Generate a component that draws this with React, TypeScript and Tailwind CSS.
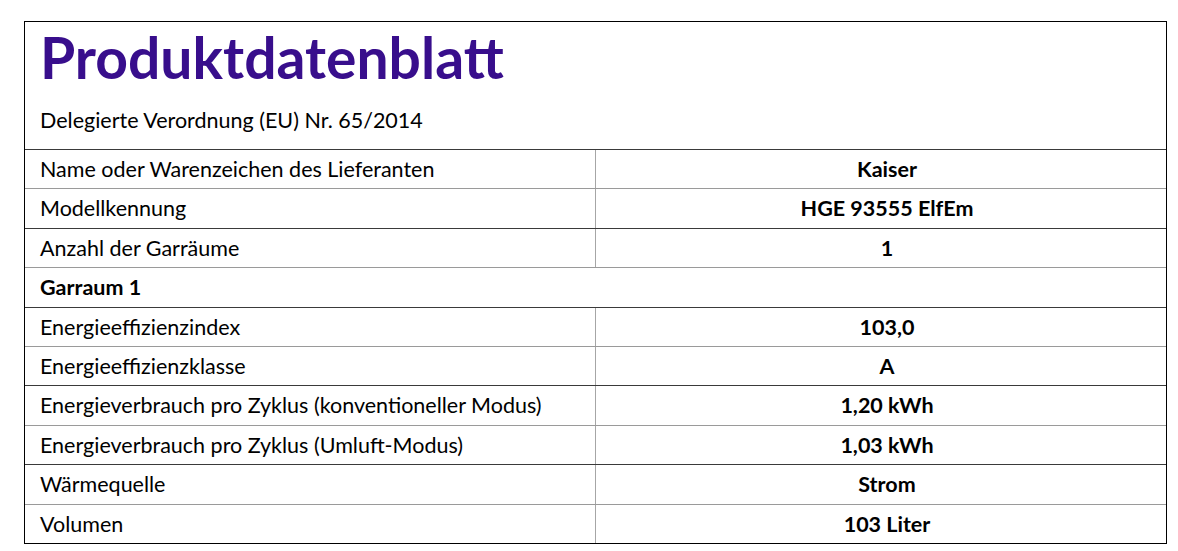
const rows: { label: string; value?: string; section?: boolean }[] = [
  { label: "Name oder Warenzeichen des Lieferanten", value: "Kaiser" },
  { label: "Modellkennung", value: "HGE 93555 ElfEm" },
  { label: "Anzahl der Garräume", value: "1" },
  { label: "Garraum 1", section: true },
  { label: "Energieeffizienzindex", value: "103,0" },
  { label: "Energieeffizienzklasse", value: "A" },
  { label: "Energieverbrauch pro Zyklus (konventioneller Modus)", value: "1,20 kWh" },
  { label: "Energieverbrauch pro Zyklus (Umluft-Modus)", value: "1,03 kWh" },
  { label: "Wärmequelle", value: "Strom" },
  { label: "Volumen", value: "103 Liter" },
];

export default function App() {
  return (
    <div className="w-[1178px] h-[551px] bg-white pt-[21px] pl-[24px] font-['Lato',sans-serif] text-black">
      <div className="w-[1143px] border border-black">
        <div className="h-[127px] px-[15px] flex flex-col">
          <h1 className="text-[#380e8c] font-bold text-[57px] leading-none mt-[7px]">
            Produktdatenblatt
          </h1>
          <p className="text-[21.5px] leading-none mt-[24px]">Delegierte Verordnung (EU) Nr. 65/2014</p>
        </div>
        {rows.map((r, i) => (
          <div
            key={i}
            className={`flex h-[39.4px] border-t ${i % 2 === 0 ? "border-[#3a3a3a]" : "border-[#9a9a9a]"}`}
          >
            {r.section ? (
              <div className="flex-1 px-[15px] flex items-center font-bold text-[21.5px]">{r.label}</div>
            ) : (
              <>
                <div className="w-[571px] px-[15px] flex items-center text-[21.5px] border-r border-[#a6a6a6]">
                  {r.label}
                </div>
                <div className="flex-1 flex items-center justify-center font-bold text-[21.5px] pl-[12px]">
                  {r.value}
                </div>
              </>
            )}
          </div>
        ))}
      </div>
    </div>
  );
}
